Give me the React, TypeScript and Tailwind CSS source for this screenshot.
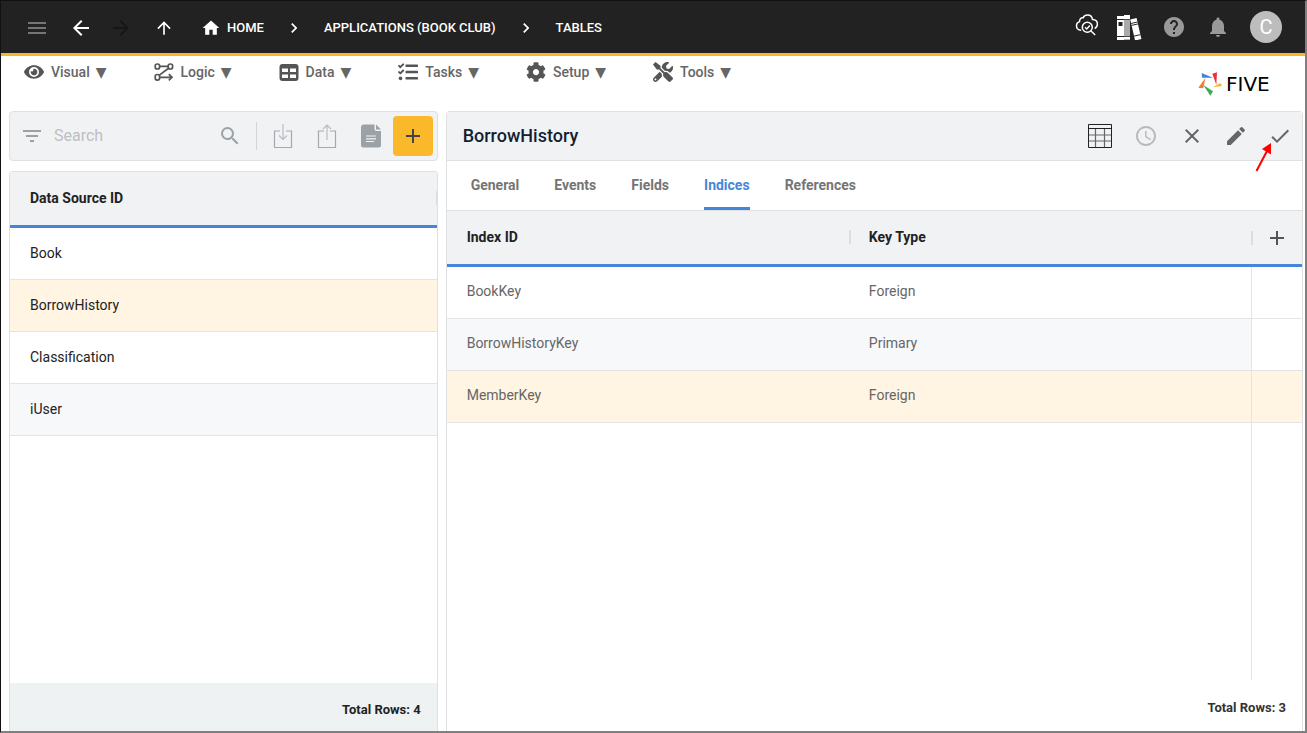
import { useState } from "react";
import type { ReactNode } from "react";
import {
  MdMenu,
  MdArrowBack,
  MdArrowForward,
  MdArrowUpward,
  MdHome,
  MdNavigateNext,
  MdHelp,
  MdNotifications,
  MdFilterList,
  MdSearch,
  MdAdd,
  MdClose,
  MdEdit,
  MdCheck,
  MdAccessTime,
} from "react-icons/md";
import { FaEye, FaTasks, FaCog, FaTools } from "react-icons/fa";

const dataSources = ["Book", "BorrowHistory", "Classification", "iUser"];

const indices = [
  { id: "BookKey", type: "Foreign" },
  { id: "BorrowHistoryKey", type: "Primary" },
  { id: "MemberKey", type: "Foreign" },
];

const tabs = ["General", "Events", "Fields", "Indices", "References"];

function LogicIcon() {
  return (
    <svg viewBox="0 0 20 20" className="w-5 h-5" fill="none" stroke="currentColor" strokeWidth="1.7">
      <rect x="1.2" y="2" width="4.4" height="5" rx="2" />
      <rect x="14.2" y="2" width="4.4" height="5" rx="2" />
      <rect x="1.2" y="12.5" width="4.4" height="5.6" rx="2" />
      <path d="M5.6 4.3H14M14.6 6.2L5 13.4M5.6 15.3H17.5M14.8 12.2L18 15.3L14.8 18.4" />
    </svg>
  );
}

function DataIcon() {
  return (
    <svg viewBox="0 0 20 20" className="w-5 h-5">
      <rect x=".5" y="2" width="19" height="17" rx="3" fill="currentColor" />
      <path d="M3 6.5h6v3.500H3zM11 6.500h6v3.500h-6zM3 12.500h6V16H3zM11 12.500h6V16h-6z" fill="#fff" />
    </svg>
  );
}

function CloudSearchIcon() {
  return (
    <svg viewBox="-2 2 24 24" className="w-6 h-6 overflow-visible" fill="none" stroke="#fff" strokeWidth="1.5">
      <path d="M6.2 17.2C3.4 17 1.4 15.2 1.5 12.6c0-2 1.3-3.5 3-4C4.6 5.7 6.3 4.5 8 4.8 9 2.9 10.6 2 12.5 2c2.7 0 4.7 1.9 5 4.5 3 .1 4.9 2 4.9 4.6 0 2-1 3.6-2.7 4.4" />
      <circle cx="12.3" cy="14.2" r="5" />
      <path d="M10 14.2l1.8 1.8 3-3.4M16 18l4.2 4" />
    </svg>
  );
}

function BooksIcon() {
  return (
    <svg viewBox="0 0 25 25" className="w-[25px] h-[25px]">
      <path d="M0 1h7v24H0z" fill="#fff" />
      <path d="M1.5 7h4v4h-4z" fill="#222" />
      <path d="M0 4.5h7M0 21.5h7" stroke="#222" strokeWidth="1" />
      <path d="M7 0h6v24.5H7z" fill="#aaa" />
      <path d="M7 0h6v4H7zM7 22h6v2.5H7z" fill="#fff" />
      <path d="M7 4.5h6M7 21.5h6" stroke="#222" strokeWidth=".7" />
      <g transform="rotate(-13 19 14)">
        <path d="M15.5 3.5h6.5V25h-6.5z" fill="#fff" />
        <path d="M15.5 7.5H22M15.5 9.5H22M15.5 20.5H22" stroke="#222" strokeWidth=".9" />
      </g>
    </svg>
  );
}

function BoxArrowIcon({ up = false }: { up?: boolean }) {
  return (
    <svg viewBox="0 0 24 26" className="w-6 h-[26px]" fill="none" strokeWidth="1.2">
      <path d="M9 8H3.5v16.5h17V8H15" stroke="#a3a9ae" />
      {up ? (
        <path d="M12 17V2M8 6l4-4 4 4" stroke="#b9bdc1" />
      ) : (
        <path d="M12 1v15.5M8 12.5l4 4 4-4" stroke="#b9bdc1" />
      )}
    </svg>
  );
}

function DocumentIcon() {
  return (
    <svg viewBox="0 0 20 24" className="w-5 h-6">
      <path d="M3 .5h10.5v4.5a2 2 0 0 0 2 2H20V21a2.5 2.5 0 0 1-2.5 2.5h-15A2.5 2.5 0 0 1 0 21V3.5a3 3 0 0 1 3-3z" fill="#9aa1a7" />
      <path d="M15 .5L20 5.5h-5z" fill="#9aa1a7" />
      <path d="M5 12h10M5 14.8h10M5 17.5h8" stroke="#f1f2f4" strokeWidth="1.2" />
    </svg>
  );
}

function GridIcon() {
  return (
    <svg viewBox="0 0 24 24" className="w-6 h-6" fill="none">
      <path d="M0 11h24M0 17h24M7.5 5v19M16.5 5v19" stroke="#666" strokeWidth="1.2" />
      <path d="M.5.5h23v23H.5zM0 4.5h24" stroke="#222" />
    </svg>
  );
}

function FiveLogo() {
  return (
    <div className="flex items-center gap-1 w-[88px] text-black">
      <svg viewBox="453 215 72 72" className="w-6 h-6 overflow-visible">
        <path d="M464 218L498 232H465z" fill="#3f87db" />
        <path d="M496 220L510 216L508 253z" fill="#e5343a" />
        <path d="M497 261L520 248L525 257z" fill="#f8b72b" />
        <path d="M469 254L498 273L490 286z" fill="#3cab57" />
        <path d="M475 233L469 264L454 262z" fill="#f47b30" />
      </svg>
      <span className="font-['DejaVu_Sans',sans-serif] text-xl leading-6">FIVE</span>
    </div>
  );
}

const menus: { label: string; icon: ReactNode }[] = [
  { label: "Visual", icon: <FaEye className="w-5 h-5" /> },
  { label: "Logic", icon: <LogicIcon /> },
  { label: "Data", icon: <DataIcon /> },
  { label: "Tasks", icon: <FaTasks className="w-5 h-5" /> },
  { label: "Setup", icon: <FaCog className="w-5 h-5" /> },
  { label: "Tools", icon: <FaTools className="w-5 h-5" /> },
];

function TopBar() {
  return (
    <header className="flex items-center justify-between h-[55px] bg-[#222] border-b-3 border-[#f9b62b] text-white pl-6 pr-[23px]">
      <nav className="flex items-center pt-0.5 text-[13px] font-medium">
        <button aria-label="Menu" className="mr-5"><MdMenu className="w-6 h-6 text-[#757575]" /></button>
        <button aria-label="Back" className="mr-4"><MdArrowBack className="w-6 h-6" /></button>
        <button aria-label="Forward" className="mr-[21px]"><MdArrowForward className="w-6 h-6 text-[#161616]" /></button>
        <button aria-label="Up" className="mr-[27px]"><MdArrowUpward className="w-5 h-5" /></button>
        <a href="#" className="flex items-center gap-1.5">
          <MdHome className="w-5 h-5" />
          HOME
        </a>
        <MdNavigateNext className="w-5 h-5 mx-5" />
        <a href="#">APPLICATIONS (BOOK CLUB)</a>
        <MdNavigateNext className="w-5 h-5 mx-5" />
        <a href="#">TABLES</a>
      </nav>
      <div className="flex items-center gap-5 text-[#999]">
        <button aria-label="Inspect"><CloudSearchIcon /></button>
        <button aria-label="Library"><BooksIcon /></button>
        <button aria-label="Help"><MdHelp className="w-6 h-6" /></button>
        <button aria-label="Notifications"><MdNotifications className="w-6 h-6" /></button>
        <button className="w-8 h-8 rounded-full bg-[#bdbdbd] text-white text-xl">C</button>
      </div>
    </header>
  );
}

function MenuBar() {
  return (
    <div className="flex justify-between items-start h-[55px] pl-[23px] pr-[19px]">
      <nav className="flex gap-[47px] pt-1">
        {menus.map((menu) => (
          <button key={menu.label} className="flex items-center h-6 text-sm font-medium text-[#666]">
            <span className="text-[#555] mr-[7px]">{menu.icon}</span>
            {menu.label}
            <span className="ml-1.5 font-['DejaVu_Sans',sans-serif]">▼</span>
          </button>
        ))}
      </nav>
      <div className="pt-4">
        <FiveLogo />
      </div>
    </div>
  );
}

function SourcePanel({ selected, onSelect }: { selected: string; onSelect: (name: string) => void }) {
  return (
    <section className="flex flex-col gap-2.5 min-w-0">
      <div className="flex items-center h-[50px] pl-2.5 pr-1 bg-[#f1f2f4] border border-[#dfe0e1] rounded">
        <MdFilterList className="w-6 h-6 mr-2.5 shrink-0 text-[#9aa1a7]" />
        <input
          aria-label="Search"
          placeholder="Search"
          className="flex-1 min-w-0 bg-transparent outline-none text-base placeholder:text-[#bdbfc1]"
        />
        <button aria-label="Find" className="mr-3.5"><MdSearch className="w-6 h-6 text-[#9aa1a7]" /></button>
        <div className="w-px h-7 mr-1 bg-[#d3d5d7]" />
        <button aria-label="Import" className="w-11 flex justify-center"><BoxArrowIcon /></button>
        <button aria-label="Export" className="w-11 flex justify-center"><BoxArrowIcon up /></button>
        <button aria-label="Report" className="w-11 flex justify-center"><DocumentIcon /></button>
        <button aria-label="Add" className="w-10 h-10 shrink-0 flex items-center justify-center rounded bg-[#f9b92b] text-[#444]">
          <MdAdd className="w-6 h-6" />
        </button>
      </div>
      <div className="flex flex-col flex-1 border border-b-0 border-[#dfe0e1] rounded-t overflow-hidden">
        <table className="w-full table-fixed border-separate border-spacing-0 text-sm text-left text-[#222]">
          <thead>
            <tr className="bg-[#f1f2f4]">
              <th className="h-14 pl-5 pb-0.5 border-b-3 border-[#4586d8] font-bold">
                <div className="flex items-center justify-between">
                  Data Source ID
                  <span className="w-px h-3.5 bg-[#dcdddf]" />
                </div>
              </th>
            </tr>
          </thead>
          <tbody>
            {dataSources.map((name, i) => (
              <tr
                key={name}
                onClick={() => onSelect(name)}
                className={name === selected ? "bg-[#fff5e2]" : i % 2 ? "bg-[#f7f8fa]" : "bg-white"}
              >
                <td className="h-[52px] pl-5 pb-0.5 border-b border-[#e3e4e5]">{name}</td>
              </tr>
            ))}
          </tbody>
        </table>
        <footer className="mt-auto h-12 flex items-center justify-end pt-1.5 pr-4 bg-[#eef2f3] text-[13px] font-bold text-[#222]">
          Total Rows: {dataSources.length}
        </footer>
      </div>
    </section>
  );
}

function DetailPanel({ title }: { title: string }) {
  const [activeTab, setActiveTab] = useState("Indices");

  return (
    <section className="flex flex-col min-w-0 border border-b-0 border-[#dfe0e1] rounded-t">
      <div className="flex items-center justify-between h-[49px] pl-4 bg-[#f1f2f4] border-b border-[#dfe0e1]">
        <h1 className="text-lg font-medium text-[#141e30]">{title}</h1>
        <div className="flex items-center text-[#666]">
          <button aria-label="Data" className="w-11 mr-0.5 flex justify-center"><GridIcon /></button>
          <button aria-label="History" className="w-11 mr-0.5 flex justify-center"><MdAccessTime className="w-6 h-6 text-[#b8babc]" /></button>
          <button aria-label="Cancel" className="w-11 flex justify-center"><MdClose className="w-6 h-6" /></button>
          <button aria-label="Edit" className="w-11 flex justify-center"><MdEdit className="w-6 h-6" /></button>
          <button aria-label="Save" className="relative w-11 flex justify-center">
            <MdCheck className="w-6 h-6" />
            <svg viewBox="0 0 20 32" className="absolute -left-1 top-4 w-5 h-8">
              <path d="M2.5 31L13 11" stroke="#f00" strokeWidth="2" />
              <path d="M17 3V14.5L8 9z" fill="#f00" />
            </svg>
          </button>
        </div>
      </div>

      <div role="tablist" className="flex gap-[35px] h-[50px] pl-6 border-b border-[#dfe0e1] text-sm font-bold">
        {tabs.map((tab) => (
          <button
            key={tab}
            role="tab"
            aria-selected={tab === activeTab}
            onClick={() => setActiveTab(tab)}
            className={`pt-0.5 border-b-3 ${
              tab === activeTab ? "border-[#4586d8] text-[#4586d8]" : "border-transparent text-[#757575]"
            }`}
          >
            {tab}
          </button>
        ))}
      </div>

      <table className="w-full table-fixed border-separate border-spacing-0 text-sm text-left">
        <thead>
          <tr className="bg-[#f1f2f4] text-[#222]">
            <th className="h-14 pl-5 pb-0.5 border-b-3 border-[#4586d8] font-bold">Index ID</th>
            <th className="pb-0.5 border-b-3 border-[#4586d8] font-bold">
              <div className="flex items-center">
                <span className="w-0.5 h-3.5 mr-[18px] bg-[#dcdddf]" />
                Key Type
              </div>
            </th>
            <th className="w-[51px] border-b-3 border-[#4586d8]">
              <div className="flex items-center">
                <span className="w-0.5 h-3.5 mr-3 bg-[#dcdddf]" />
                <button aria-label="Add index"><MdAdd className="w-6 h-6 text-[#555]" /></button>
              </div>
            </th>
          </tr>
        </thead>
        <tbody>
          {indices.map((row, i) => {
            const color = i === 2 ? "bg-[#fff5e2]" : i % 2 ? "bg-[#f7f8fa]" : "bg-white";
            return (
              <tr key={row.id} className="text-[#666]">
                <td className={`h-[52px] pl-5 pb-1 border-b border-[#e3e4e5] ${color}`}>{row.id}</td>
                <td className={`pl-5 pb-1 border-b border-[#e3e4e5] ${color}`}>{row.type}</td>
                <td className={`border-b border-l border-[#e3e4e5] ${i === 2 ? color : ""}`} />
              </tr>
            );
          })}
        </tbody>
      </table>
      <div className="flex-1 flex justify-end">
        <div className="w-[51px] border-l border-[#e3e4e5]" />
      </div>
      <footer className="h-[51px] flex items-center justify-end pt-1 pr-4 text-[13px] font-bold text-[#333]">
        Total Rows: {indices.length}
      </footer>
    </section>
  );
}

export default function App() {
  const [selected, setSelected] = useState("BorrowHistory");

  return (
    <div className="flex flex-col h-screen bg-white font-[Roboto,sans-serif] border-t border-l border-t-[#111] border-l-[#111] border-r-2 border-b-2 border-r-[#808080] border-b-[#808080]">
      <TopBar />
      <MenuBar />
      <main className="flex-1 min-h-0 grid grid-cols-[1fr_2fr] gap-2 pl-2 pr-0.5">
        <SourcePanel selected={selected} onSelect={setSelected} />
        <DetailPanel title={selected} />
      </main>
    </div>
  );
}
